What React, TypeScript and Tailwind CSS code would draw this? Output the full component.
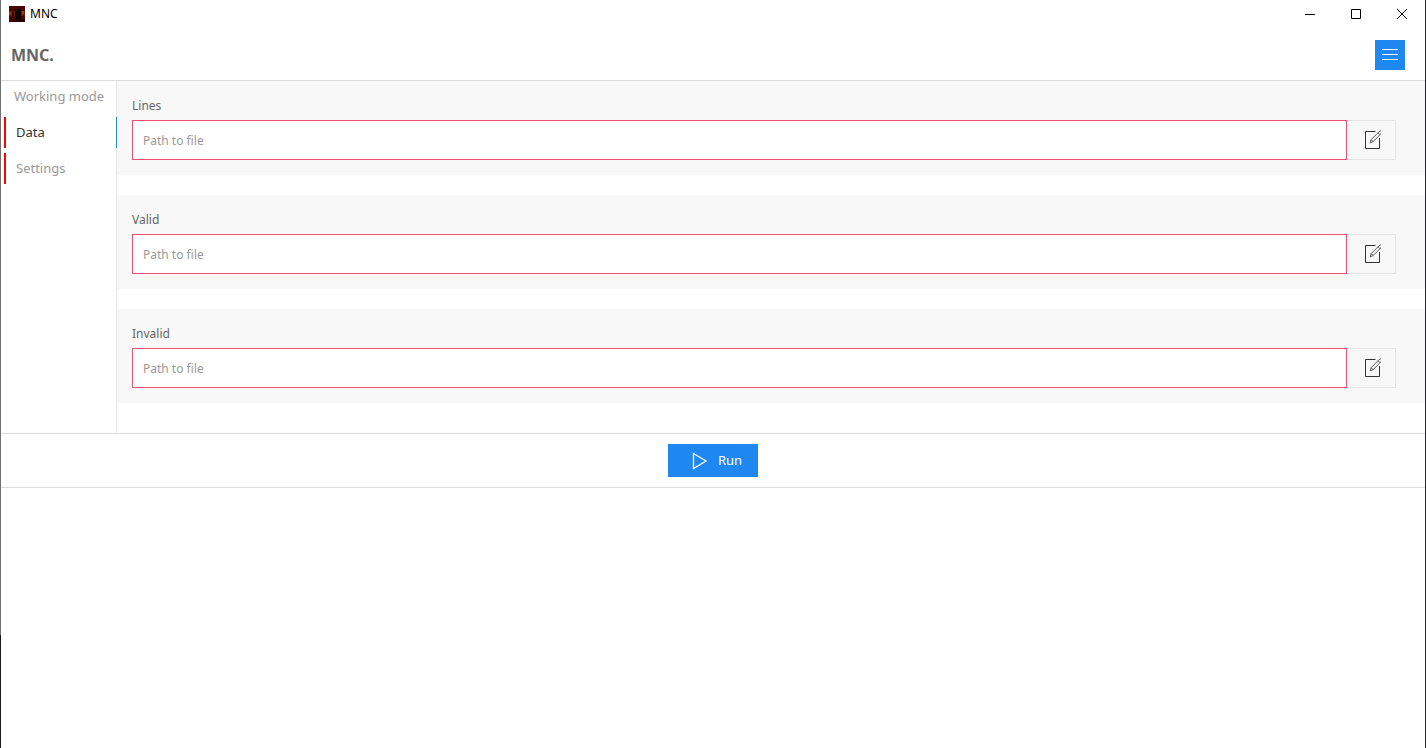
import { useState } from 'react'

const TABS = [
  { id: 'mode', label: 'Working mode', invalid: false },
  { id: 'data', label: 'Data', invalid: true },
  { id: 'settings', label: 'Settings', invalid: true },
]

const FIELDS = [
  { id: 'lines', label: 'Lines' },
  { id: 'valid', label: 'Valid' },
  { id: 'invalid', label: 'Invalid' },
]

function AppIcon() {
  return (
    <svg width="16" height="16" viewBox="0 0 16 16" shapeRendering="crispEdges">
      <rect width="16" height="16" fill="#4a0504" />
      <rect y="5" width="16" height="5" fill="#6b1a0c" />
      <rect y="6" width="2" height="3" fill="#8f3a20" />
      <rect x="3" y="6" width="2" height="4" fill="#2c0503" />
      <rect x="13" y="5" width="2" height="3" fill="#94402a" />
      <rect x="6" y="3" width="6" height="10" fill="#0d0202" />
      <rect x="7" y="4" width="2" height="2" fill="#2a0806" />
      <rect y="12" width="6" height="4" fill="#3a0403" />
      <rect x="6" y="13" width="10" height="3" fill="#2a0404" />
    </svg>
  )
}

function TitleBar() {
  return (
    <div className="flex h-7 items-center justify-between">
      <div className="flex items-center gap-[5px] pl-2 text-xs text-black">
        <AppIcon />
        <span>MNC</span>
      </div>
      <div className="flex h-full text-black">
        <button aria-label="Minimize" className="flex w-[46px] items-center justify-center hover:bg-gray-200">
          <svg width="10" height="10" viewBox="0 0 10 10" stroke="currentColor">
            <path d="M0 5.5h10" />
          </svg>
        </button>
        <button aria-label="Maximize" className="flex w-[46px] items-center justify-center hover:bg-gray-200">
          <svg width="10" height="10" viewBox="0 0 10 10" fill="none" stroke="currentColor">
            <path d="M.5.5h9v9h-9z" />
          </svg>
        </button>
        <button aria-label="Close" className="flex w-[46px] items-center justify-center hover:bg-red-500">
          <svg width="10" height="10" viewBox="0 0 10 10" stroke="currentColor">
            <path d="M0 0l10 10M10 0L0 10" />
          </svg>
        </button>
      </div>
    </div>
  )
}

function PathField({ id, label }: { id: string; label: string }) {
  const [value, setValue] = useState('')

  return (
    <div className="bg-[#f8f8f8] py-[15px] pr-[29px] pl-[15px]">
      <label htmlFor={id} className="mb-1 block text-xs leading-5 text-[#666]">
        {label}
      </label>
      <div className="flex h-10">
        <input
          id={id}
          type="text"
          value={value}
          onChange={(e) => setValue(e.target.value)}
          placeholder="Path to file"
          className="min-w-0 flex-1 border border-[#f0506e] bg-white px-2.5 pt-0.5 text-xs text-[#666] placeholder-[#999] focus:outline-none"
        />
        <button
          aria-label={`Choose ${label} file`}
          className="flex w-[49px] items-center justify-center border border-l-0 border-[#e5e5e5] text-[#333]"
        >
          <svg width="20" height="20" viewBox="0 0 20 20" fill="none" stroke="currentColor">
            <path d="M14.5 1.5h-10v17h14V8" />
            <path
              d="M9.2 12.8l1-3.2L18.6 1.2q.7-.6 1.4 0l.5.5q.6.7 0 1.4L12.2 11.6zM17 2.8l1.9 1.9M10.2 9.6l2 2"
              strokeWidth=".8"
            />
          </svg>
        </button>
      </div>
    </div>
  )
}

export default function App() {
  const [active, setActive] = useState('data')

  return (
    <div className="flex min-h-screen bg-white font-['Noto_Sans',sans-serif]">
      {/* window frame, left */}
      <div className="flex w-px flex-col">
        <div className="flex-1 bg-[#707070]" />
        <div className="h-[113px] bg-[#1b1b1d]" />
      </div>

      <div className="min-w-0 flex-1">
        <TitleBar />

        <header className="flex h-[53px] items-center justify-between border-b border-[#dcdcdc] pt-0.5 pr-5 pl-2.5">
          <h1 className="text-base font-bold text-[#666]">MNC.</h1>
          <button aria-label="Menu" className="flex size-[30px] items-center justify-center bg-[#1e87f0] text-white">
            <svg width="16" height="12" viewBox="0 0 16 12" stroke="currentColor">
              <path d="M0 .5h16M0 5.5h16M0 10.5h16" />
            </svg>
          </button>
        </header>

        <main className="flex">
          <nav className="flex w-[116px] flex-col gap-[5px] border-r border-[#e5e5e5] pl-[3px]">
            {TABS.map((tab) => (
              <button
                key={tab.id}
                onClick={() => setActive(tab.id)}
                className={`h-[31px] pl-2.5 text-left text-[13px] whitespace-nowrap ${
                  tab.invalid ? 'border-l-2 border-l-[red]' : ''
                } ${active === tab.id ? '-mr-px border-r border-r-[#1e87f0] text-[#333]' : 'text-[#999]'}`}
              >
                {tab.label}
              </button>
            ))}
          </nav>

          <div className="flex flex-1 flex-col gap-5 pb-[30px]">
            {FIELDS.map((field) => (
              <PathField key={field.id} id={field.id} label={field.label} />
            ))}
          </div>
        </main>

        <div className="flex justify-center border-y border-[#dcdcdc] py-2.5">
          <button className="flex h-[33px] items-center gap-2 bg-[#1e87f0] pr-4 pl-[22px] text-[13px] text-white">
            <svg width="20" height="20" viewBox="0 0 20 20" fill="none" stroke="currentColor" strokeWidth="1.3">
              <path d="M3.5 2.5L16 10 3.5 17.5z" />
            </svg>
            Run
          </button>
        </div>
      </div>

      {/* window frame, right */}
      <div className="w-px bg-[#222225]" />
    </div>
  )
}
